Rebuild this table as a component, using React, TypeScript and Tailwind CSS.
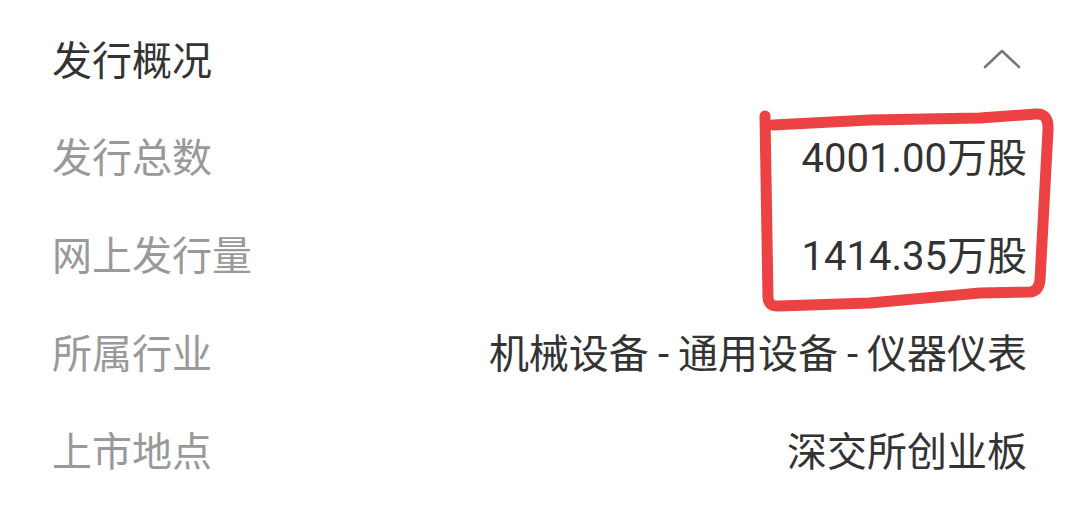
import React from 'react';

const rows = [
  { label: '发行总数', value: '4001.00万股' },
  { label: '网上发行量', value: '1414.35万股' },
  { label: '所属行业', value: '机械设备-通用设备-仪器仪表' },
  { label: '上市地点', value: '深交所创业板' },
];

// the app draws the industry separators as wide dashes
const withDashes = (text: string) =>
  text.split('-').map((part, i) => (
    <React.Fragment key={i}>
      {i > 0 && <span className="mx-[9px]">-</span>}
      {part}
    </React.Fragment>
  ));

const App: React.FC = () => {
  return (
    <div
      className="relative w-[1079px] h-[512px] bg-white overflow-hidden"
      style={{ fontFamily: 'Roboto, "Noto Sans CJK SC", sans-serif' }}
    >
      <div className="pt-[14px] px-[52px]">
        <div className="h-[96px] flex items-center justify-between">
          <h2 className="text-[40px] leading-none text-[#333333]">发行概况</h2>
          <svg width="40" height="24" viewBox="0 0 40 24" className="mr-[5px] mt-[-2px]">
            <polyline
              points="3,18 20,2 37,18"
              fill="none"
              stroke="#777777"
              strokeWidth="2.6"
              strokeLinecap="round"
              strokeLinejoin="round"
            />
          </svg>
        </div>
        {rows.map((r) => (
          <div key={r.label} className="h-[98px] flex items-center justify-between">
            <span className="text-[40px] leading-none text-[#999999]">{r.label}</span>
            <span className="text-[40px] leading-none text-[#333333]">{withDashes(r.value)}</span>
          </div>
        ))}
      </div>

      {/* hand-drawn highlight over the two share counts */}
      <svg className="absolute left-0 top-0 pointer-events-none" width="1079" height="512">
        <path
          d="M765,116 L768,298 Q769,307 779,306 L870,303 L980,293 L1030,292 Q1039,291 1040,280 L1048,130 Q1049,113 1036,114 L980,118 L870,120 L773,125"
          fill="none"
          stroke="#ec4243"
          strokeWidth="11"
          strokeLinecap="round"
          strokeLinejoin="round"
        />
      </svg>
    </div>
  );
};

export default App;
